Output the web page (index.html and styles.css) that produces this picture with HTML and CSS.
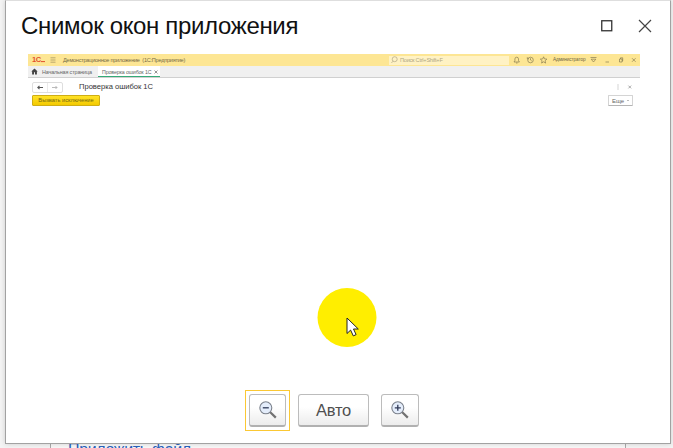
FILE: index.html
```html
<!DOCTYPE html>
<html lang="ru">
<head>
<meta charset="utf-8">
<title>Снимок окон приложения</title>
<link rel="stylesheet" href="styles.css">
</head>
<body>
<div class="page-behind"><span class="attach">Приложить файл</span></div>
<main class="dialog">
  <header class="dialog-head">
    <h1>Снимок окон приложения</h1>
    <svg class="maximize" width="12" height="12" viewBox="0 0 12 12"><rect x=".75" y=".75" width="10" height="10"/></svg>
    <svg class="close" width="14" height="14" viewBox="0 0 14 14"><path d="M1 1l12 12M13 1L1 13"/></svg>
  </header>

  <section class="shot">
    <div class="app-bar">
      <span class="logo">1С<svg width="4" height="6" viewBox="0 0 4 6"><path d="M0 4.6h4"/></svg></span>
      <svg class="burger" width="6" height="6" viewBox="0 0 6 6"><path d="M.5.8h5M.5 3h5M.5 5.2h5"/></svg>
      <span class="app-name">Демонстрационное приложение&nbsp; (1С:Предприятие)</span>
      <div class="search">
        <svg width="7" height="8" viewBox="0 0 7 8"><circle cx="3.7" cy="3.2" r="2.5"/><path d="M2 5.2L.4 7"/></svg>
        <span>Поиск Ctrl+Shift+F</span>
      </div>
      <svg class="tools" width="36" height="8" viewBox="0 0 36 8"><path d="M1 6h5.4L5.5 4.5V3a1.8 1.8 0 0 0-3.6 0v1.5zM3 7h1.5"/><circle cx="17.5" cy="4" r="2.8"/><path d="M17.5 2.2V4l1.3 1M14.3 1.2v1.6h1.6M30.6.8l.9 2.1 2.4.2-1.8 1.6.5 2.4-2-1.3-2 1.3.5-2.4-1.8-1.6 2.4-.2z"/></svg>
      <span class="user">Администратор</span>
      <svg class="wins" width="48" height="8" viewBox="0 0 48 8"><path d="M.5 1.5h6M1.2 3.2h4.6L3.5 6zM15.5 6h3.5M29.5 3h2.6v3h-2.6zM30.5 3V1.8h2.2v3H32M42 2.2l3.6 3.6M45.6 2.2L42 5.8"/></svg>
    </div>
    <nav class="tabs">
      <svg width="7" height="7" viewBox="0 0 7 7"><path d="M3.5.4L.3 3.5h.8v2.9H3V4.3h1v2.1h1.9V3.5h.8z" fill="#444"/></svg>
      <span class="home">Начальная страница</span>
      <div class="tab"><span>Проверка ошибок 1С</span><svg width="4" height="4" viewBox="0 0 4 4"><path d="M.5.5l3 3M3.5.5l-3 3"/></svg></div>
    </nav>
    <div class="form-head">
      <div class="nav-buttons">
        <svg width="29" height="9" viewBox="0 0 29 9"><path d="M10 4.5H4.8M6.5 2.8L4.8 4.5l1.7 1.7" stroke="#555" stroke-width="1.1"/><path d="M14.5 0v9" stroke="#e4e4e4"/><path d="M19 4.5h5M22.5 3L24 4.5 22.5 6" stroke="#aaa"/></svg>
      </div>
      <h2>Проверка ошибок 1С</h2>
      <svg class="form-icons" width="16" height="6" viewBox="0 0 16 6"><path d="M2 .5v1M2 2.5v1M2 4.5v1M12.4 1.6l2.8 2.8M15.2 1.6l-2.8 2.8"/></svg>
    </div>
    <div class="commands">
      <div class="raise">Вызвать исключение</div>
      <div class="more">Еще <i></i></div>
    </div>
  </section>

  <footer class="zoom-bar">
    <div class="focus"><button class="btn" aria-label="Уменьшить"><svg width="20" height="20" viewBox="0 0 20 20"><path class="handle" d="M12 12l5.8 5.6"/><circle cx="7.8" cy="7.8" r="6"/><path class="sign" d="M4.8 7.8h6"/></svg></button></div>
    <button class="btn auto">Авто</button>
    <button class="btn" aria-label="Увеличить"><svg width="20" height="20" viewBox="0 0 20 20"><path class="handle" d="M12 12l5.8 5.6"/><circle cx="7.8" cy="7.8" r="6"/><path class="sign" d="M4.8 7.8h6M7.8 4.8v6"/></svg></button>
  </footer>
</main>
<div class="pointer-spot">
  <svg width="60" height="60" viewBox="0 0 60 60"><circle cx="30" cy="29.5" r="29.5" fill="#ffee00"/><path d="M30 30v15.5l3.6-3.4 2.7 5.8 2.8-1.3-2.6-5.6h4.8z" fill="#fff" stroke="#222" stroke-width="1"/></svg>
</div>
</body>
</html>
```

FILE: styles.css
```css
* { box-sizing: border-box; }
html, body { margin: 0; height: 448px; overflow: hidden; }
body {
  position: relative;
  background: #f4f4f4;
  font-family: "Liberation Sans", Arial, sans-serif;
}
svg { display: block; flex: none; fill: none; }

.page-behind {
  position: absolute;
  left: 50px;
  top: 420px;
  width: 576px;
  height: 28px;
  padding: 20px 0 0 17px;
  overflow: hidden;
  background: #f8f8f8;
  border: solid #aaa;
  border-width: 0 1px;
}
.attach {
  display: block;
  font-size: 16px;
  line-height: 20px;
  letter-spacing: -.35px;
  color: #2b62bd;
}

.dialog {
  position: relative;
  display: flex;
  flex-direction: column;
  width: 666px;
  height: 444px;
  margin-left: 5px;
  background: #fff;
  border: 1px solid #a2a2a2;
  border-top-color: #dedede;
  box-shadow: 0 0 5px rgba(0, 0, 0, .16);
}
.dialog-head {
  display: flex;
  align-items: center;
  height: 53px;
  padding: 0 18px 3px 15px;
}
h1 {
  flex: 1;
  margin: 0;
  font-size: 24px;
  font-weight: 400;
  line-height: 28px;
  letter-spacing: -.34px;
  color: #111;
  white-space: nowrap;
}
.maximize { margin-right: 25px; stroke: #333; stroke-width: 1.3; }
.close { stroke: #444; stroke-width: 1.2; }

.shot {
  width: 612px;
  margin-left: 22px;
  flex: 1;
  color: #666;
  font-size: 5.6px;
  line-height: 8px;
  white-space: nowrap;
}
.app-bar {
  display: flex;
  align-items: center;
  height: 12px;
  background: #fde694;
  stroke-width: .6;
}
.app-bar svg { stroke: #756b48; }
.logo {
  display: flex;
  width: 17px;
  margin-left: 4px;
  align-items: center;
  color: #e2502c;
  font-size: 7.5px;
  font-weight: 700;
  letter-spacing: -.5px;
}
.app-bar .logo svg { stroke: #e2502c; stroke-width: 1; }
.app-bar .burger { margin-left: 1px; stroke-width: .5; }
.app-name { width: 326px; margin-left: 7px; color: #766b48; letter-spacing: -.26px; }
.search {
  display: flex;
  align-items: center;
  width: 120px;
  height: 9px;
  padding-left: 2px;
  gap: 2px;
  background: #fff2c4;
  color: #b0a783;
  letter-spacing: -.24px;
}
.search svg { stroke: #a49c7c; }
.tools { margin-left: 4px; }
.user { width: 33px; margin-left: 4px; font-size: 4.7px; letter-spacing: -.1px; color: #6d6442; }
.wins { margin-left: 4px; }

.tabs {
  display: flex;
  align-items: flex-start;
  height: 12px;
  padding-left: 3px;
  background: #f0f0f0;
  border-bottom: 1px solid #d0d0d0;
}
.tabs > svg { margin-top: 2px; }
.home { width: 56px; margin: 2px 0 0 4px; font-size: 5.4px; letter-spacing: -.13px; }
.tab {
  display: flex;
  align-items: center;
  gap: 3px;
  height: 11px;
  width: 62px;
  padding: 1px 0 0 4px;
  background: #fff;
  border-bottom: 1px solid #35ab78;
  font-size: 5.3px;
  letter-spacing: -.14px;
}
.tab svg { stroke: #666; stroke-width: .7; }

.form-head { display: flex; align-items: center; height: 17px; padding: 1px 8px 0 4px; }
.nav-buttons {
  height: 11px;
  width: 31px;
  border: 1px solid #dedede;
  border-radius: 2px;
}
.nav-buttons svg { stroke-width: .8; }
h2 {
  flex: 1;
  margin: 0 0 0 16px;
  font-size: 7.6px;
  font-weight: 400;
  letter-spacing: -.02px;
  color: #333;
}
.form-icons { stroke: #888; stroke-width: .7; }
.commands { display: flex; justify-content: space-between; padding: 0 7px 0 4px; }
.raise {
  width: 68px;
  height: 11px;
  border: 1px solid #cfae14;
  border-radius: 1px;
  background: linear-gradient(#ffe227, #f4ca00);
  color: #75660d;
  font-size: 5.7px;
  line-height: 9px;
  text-align: center;
}
.more {
  display: flex;
  align-items: center;
  justify-content: center;
  gap: 3px;
  width: 25px;
  height: 11px;
  border: 1px solid #d4d4d4;
  border-bottom-color: #b4b4b4;
  border-radius: 1px;
  font-size: 6px;
}
.more i { border: 1px solid transparent; border-top-color: #777; }

.zoom-bar {
  display: flex;
  align-items: center;
  height: 41px;
  margin: 0 0 12px 239px;
}
.focus { padding: 3px; border: 1px solid #fbc834; }
.btn {
  display: flex;
  align-items: center;
  justify-content: center;
  width: 38px;
  height: 33px;
  padding: 0 0 1px;
  border: 1px solid #bcbcbc;
  border-bottom: 2px solid #b0b0b0;
  border-radius: 3px;
  background: linear-gradient(#fff 40%, #ececec);
  font: 16.5px/20px "Liberation Sans", Arial, sans-serif;
  letter-spacing: -.2px;
  color: #505050;
}
.focus .btn { width: 37px; height: 33px; }
.auto { width: 71px; margin: 0 12px 0 8px; padding-top: 1px; }
.btn circle { fill: #e4edfb; stroke: #7c828c; stroke-width: 1.1; }
.handle { stroke: #727272; stroke-width: 2.2; }
.sign { stroke: #303a58; stroke-width: 1.3; }

.pointer-spot { position: absolute; left: 317px; top: 288px; }
```
